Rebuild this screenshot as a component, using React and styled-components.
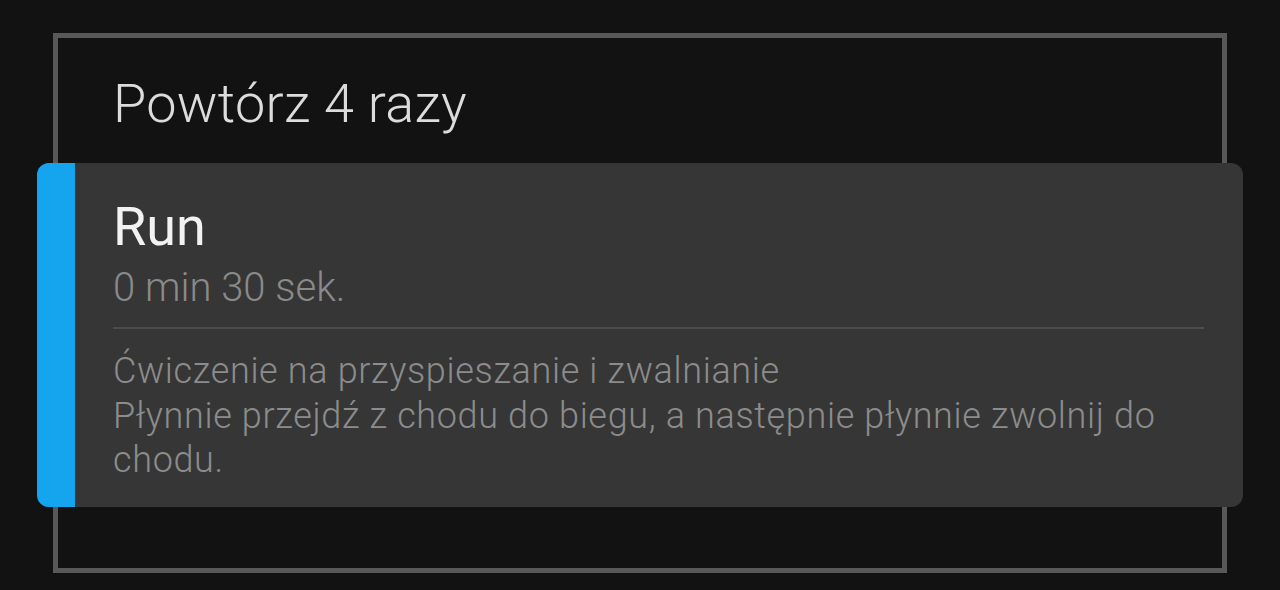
import React from "react";
import styled, { createGlobalStyle } from "styled-components";

const Global = createGlobalStyle`
  html, body { margin: 0; padding: 0; background: #121212; }
  body { font-family: Roboto, "Noto Sans", sans-serif; }
`;

const Page = styled.div`
  width: 1280px;
  height: 590px;
  background: #121212;
  padding-top: 33px;
  box-sizing: border-box;
  overflow: hidden;
`;

const RepeatBox = styled.section`
  margin-left: 53px;
  width: 1174px;
  height: 540px;
  box-sizing: border-box;
  border: 5px solid #585858;
  display: flex;
  flex-direction: column;
`;

const RepeatTitle = styled.h1`
  margin: 34px 0 27px 55px;
  font-size: 54px;
  line-height: 64px;
  font-weight: 300;
  letter-spacing: 0.3px;
  color: #dcdcdc;
`;

const StepCard = styled.article`
  margin: 0 -21px;
  display: flex;
  background: #363636;
  border-radius: 12px;
  overflow: hidden;
`;

const Accent = styled.div`
  width: 38px;
  flex: none;
  background: ${(p) => p.$color};
`;

const StepBody = styled.div`
  flex: 1;
  padding: 32px 39px 24px 38px;
  display: flex;
  flex-direction: column;
`;

const StepName = styled.div`
  font-size: 54px;
  line-height: 64px;
  font-weight: 400;
  color: #f2f2f2;
`;

const StepDuration = styled.div`
  margin-top: 5px;
  font-size: 40px;
  line-height: 48px;
  font-weight: 300;
  color: #8a8a8a;
`;

const Divider = styled.hr`
  margin: 15px 0 20px;
  border: none;
  height: 2px;
  background: #4c4c4c;
`;

const StepNote = styled.p`
  margin: 0;
  font-size: 36px;
  line-height: 44.5px;
  font-weight: 300;
  letter-spacing: 0.65px;
  color: #8c8c8c;
`;

export default function App() {
  return (
    <Page>
      <Global />
      <RepeatBox>
        <RepeatTitle>Powtórz 4 razy</RepeatTitle>
        <StepCard>
          <Accent $color="#14a5ee" />
          <StepBody>
            <StepName>Run</StepName>
            <StepDuration>0 min 30 sek.</StepDuration>
            <Divider />
            <StepNote>
              Ćwiczenie na przyspieszanie i zwalnianie
              <br />
              Płynnie przejdź z chodu do biegu, a następnie płynnie zwolnij do chodu.
            </StepNote>
          </StepBody>
        </StepCard>
      </RepeatBox>
    </Page>
  );
}
